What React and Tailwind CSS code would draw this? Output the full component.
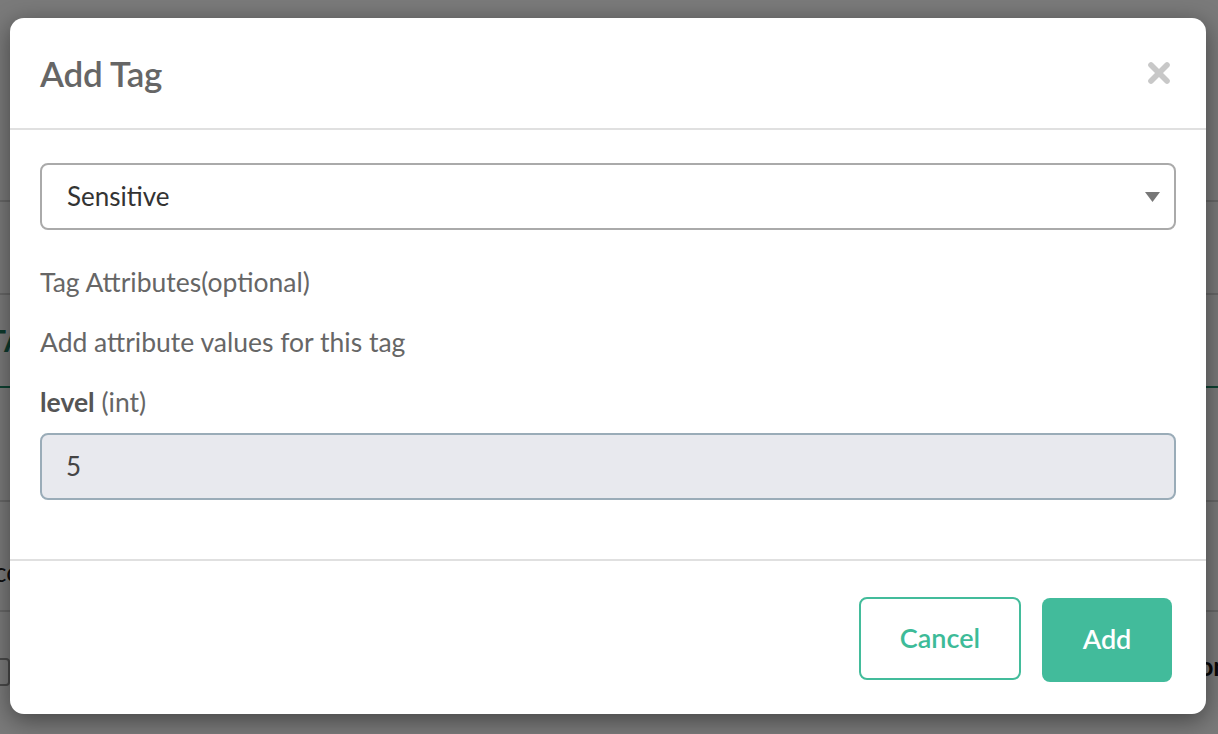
import { X } from "lucide-react";

function BackgroundPage() {
  return (
    <div className="absolute inset-0 bg-white font-['Lato',sans-serif]">
      <div className="h-[202px] border-b-2 border-[#d8d8d8]" />
      <div className="h-[93px] border-b-2 border-[#d8d8d8]" />
      <div className="h-[93px] border-b-2 border-[#1e8a6a] flex items-center">
        <span className="text-[30px] font-bold text-[#1e7a5e] -ml-[12px]">TA</span>
      </div>
      <div className="h-[114px] border-b-2 border-[#d8d8d8]" />
      <div className="h-[110px] border-b-2 border-[#d8d8d8] flex items-end pb-[18px]">
        <span className="text-[26px] text-[#222] -ml-[6px]">co</span>
      </div>
      <div className="h-[90px] flex items-center justify-between pt-[30px]">
        <span className="w-[22px] h-[28px] border-2 border-[#999] rounded -ml-[12px]" />
        <span className="text-[26px] font-bold text-[#111] -mr-[10px] -mt-[12px]">on</span>
      </div>
    </div>
  );
}

export default function App() {
  return (
    <div className="relative w-full h-[734px] overflow-hidden font-['Lato',sans-serif]">
      <BackgroundPage />
      <div className="absolute inset-0 bg-black/[0.52] pl-[10px] pr-[12px] pt-[18px]">
        <div className="bg-white rounded-[14px] h-[696px] shadow-[0_6px_24px_rgba(0,0,0,0.45)] flex flex-col">
          <div className="h-[112px] flex items-center justify-between px-[30px] border-b-2 border-[#e0e0e0]">
            <h1 className="text-[35px] font-semibold text-[#666] tracking-[-0.2px]">Add Tag</h1>
            <X className="w-[32px] h-[32px] text-[#c8c8c8] mr-[1px]" strokeWidth={4.2} />
          </div>
          <div className="flex-1 px-[30px] pt-[33px] flex flex-col border-b-2 border-[#e0e0e0]">
            <div className="h-[67px] border-2 border-[#aaaaaa] rounded-[8px] flex items-center justify-between pl-[25px] pr-[14px]">
              <span className="text-[26px] text-[#333]">Sensitive</span>
              <svg width="15" height="10" viewBox="0 0 15 10"><path d="M0 0 L15 0 L7.5 10 Z" fill="#777" /></svg>
            </div>
            <div className="mt-[35px] text-[26.5px] text-[#666] leading-[34px]">Tag Attributes(optional)</div>
            <div className="mt-[26px] text-[26.5px] text-[#666] leading-[34px]">Add attribute values for this tag</div>
            <div className="mt-[26px] text-[26.5px] text-[#666] leading-[34px]">
              <span className="font-bold text-[#555]">level</span> (int)
            </div>
            <div className="mt-[14px] h-[67px] bg-[#e8e9ee] border-2 border-[#9aacb8] rounded-[8px] flex items-center pl-[24px]">
              <span className="text-[26px] text-[#444]">5</span>
            </div>
          </div>
          <div className="h-[153px] flex items-center justify-end gap-[21px] pr-[34px] pt-[2px]">
            <button className="w-[162px] h-[83px] border-2 border-[#43bc9b] rounded-[8px] text-[27px] text-[#3dbb98] font-semibold">Cancel</button>
            <button className="w-[130px] h-[84px] mt-[2px] bg-[#42bb9b] rounded-[8px] text-[27px] text-white font-semibold">Add</button>
          </div>
        </div>
      </div>
    </div>
  );
}
